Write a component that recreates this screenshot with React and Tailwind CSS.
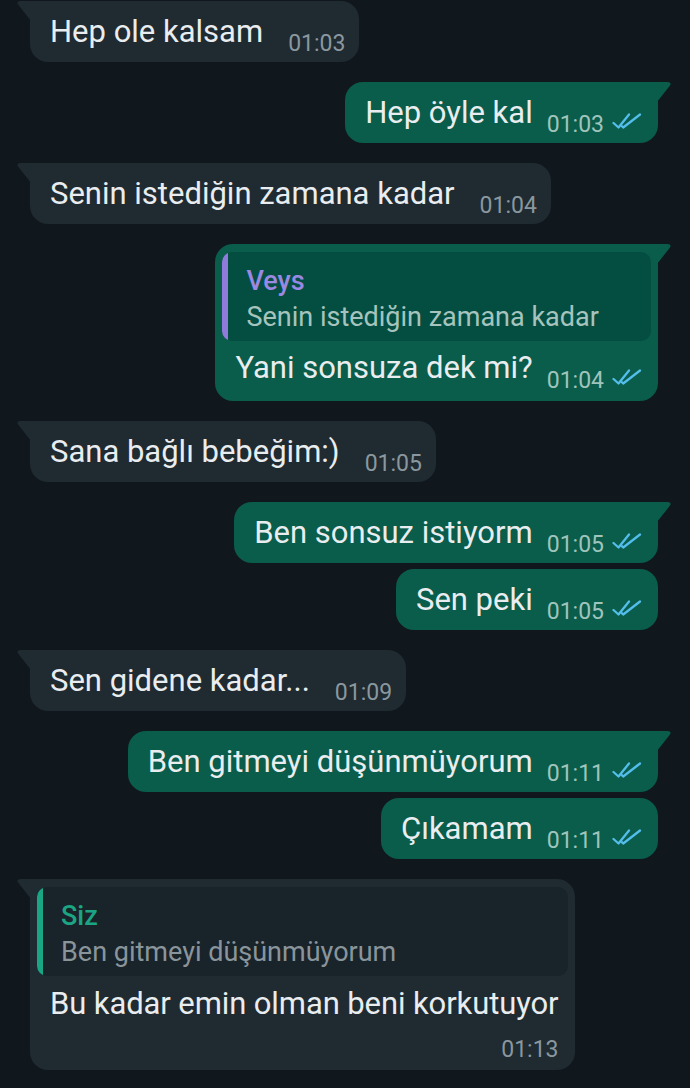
import React from 'react'

const messages = [
  { id: 1, out: false, text: 'Hep ole kalsam', time: '01:03', tail: true },
  { id: 2, out: true, text: 'Hep öyle kal', time: '01:03', tail: true },
  { id: 3, out: false, text: 'Senin istediğin zamana kadar', time: '01:04', tail: true },
  {
    id: 4,
    out: true,
    text: 'Yani sonsuza dek mi?',
    time: '01:04',
    tail: true,
    reply: { name: 'Veys', text: 'Senin istediğin zamana kadar' },
  },
  { id: 5, out: false, text: 'Sana bağlı bebeğim:)', time: '01:05', tail: true },
  { id: 6, out: true, text: 'Ben sonsuz istiyorm', time: '01:05', tail: true },
  { id: 7, out: true, text: 'Sen peki', time: '01:05', tail: false },
  { id: 8, out: false, text: 'Sen gidene kadar...', time: '01:09', tail: true },
  { id: 9, out: true, text: 'Ben gitmeyi düşünmüyorum', time: '01:11', tail: true },
  { id: 10, out: true, text: 'Çıkamam', time: '01:11', tail: false },
  {
    id: 11,
    out: false,
    text: 'Bu kadar emin olman beni korkutuyor',
    time: '01:13',
    tail: true,
    stacked: true,
    reply: { name: 'Siz', text: 'Ben gitmeyi düşünmüyorum' },
  },
]

const DoubleCheck = () => (
  <svg
    width="30"
    height="16"
    viewBox="0 0 30 16"
    fill="none"
    stroke="#53bdeb"
    strokeWidth="2.3"
    strokeLinecap="round"
    strokeLinejoin="round"
    className="mb-[9px] shrink-0"
  >
    <path d="M1.5 10 L6.5 14.5 L17 1.5" />
    <path d="M9.8 13.2 L11.2 14.5 L28 1.5" />
  </svg>
)

const Tail = ({ out }) => (
  <svg
    width="14"
    height="20"
    viewBox="0 0 14 20"
    className={out ? 'absolute top-0 right-[-13px]' : 'absolute top-0 left-[-13px] -scale-x-100'}
  >
    <path d="M0 0 H10.5 C13.6 0 14.4 1.9 12.6 4.1 L0 20 Z" fill={out ? '#0a5c4b' : '#1f2a31'} />
  </svg>
)

const Quote = ({ reply, out }) => (
  <div
    className={
      out
        ? 'flex overflow-hidden rounded-[10px] bg-[#044e41]'
        : 'flex overflow-hidden rounded-[10px] bg-[#19232a]'
    }
  >
    <div className={out ? 'w-[6px] shrink-0 bg-[#8f7bdc]' : 'w-[6px] shrink-0 bg-[#1aa583]'} />
    <div className="flex-1 pt-[11px] pb-[6px] pl-[18px] pr-[20px] text-[27px]">
      <div className={out ? 'leading-[36px] font-medium text-[#9a88e2]' : 'leading-[36px] font-medium text-[#1ba583]'}>
        {reply.name}
      </div>
      <div className={out ? 'leading-[36px] text-[#a6c4bd] whitespace-nowrap' : 'leading-[36px] text-[#89959b] whitespace-nowrap'}>
        {reply.text}
      </div>
    </div>
  </div>
)

const Bubble = ({ msg }) => {
  const { out, text, time, tail, reply, stacked } = msg
  const corners = tail ? (out ? 'rounded-[18px] rounded-tr-none' : 'rounded-[18px] rounded-tl-none') : 'rounded-[18px]'
  const timeColor = out ? 'text-[#9fc4bb]' : 'text-[#8a979e]'

  return (
    <div className={`relative ${corners} ${out ? 'bg-[#0a5c4b]' : 'bg-[#1f2a31]'} ${reply ? 'pt-[8px]' : ''}`}>
      {tail && <Tail out={out} />}
      {reply && (
        <div className="px-[7px]">
          <Quote reply={reply} out={out} />
        </div>
      )}
      {stacked ? (
        <div className="flex flex-col pl-[20px] pr-[16px] pt-[10px] pb-[7px]">
          <span className="text-[31px] leading-[36px] tracking-[-0.1px] text-[#e9edef] whitespace-nowrap">{text}</span>
          <span className={`mt-[15px] self-end text-[23px] leading-[26px] ${timeColor}`}>{time}</span>
        </div>
      ) : (
        <div
          className={`flex items-end pl-[20px] ${reply ? 'pt-[9px] pb-[7px]' : 'pt-[13px] pb-[5px]'} ${out ? 'pr-[16px]' : 'pr-[14px]'}`}
        >
          <span className={`text-[31px] leading-[36px] text-[#e9edef] whitespace-nowrap ${reply ? 'mb-2' : 'mb-[7px]'}`}>
            {text}
          </span>
          <div className={`flex items-end gap-[8px] ${out ? 'ml-[14px]' : 'ml-[25px]'}`}>
            <span className={`text-[23px] leading-[26px] ${timeColor}`}>{time}</span>
            {out && <DoubleCheck />}
          </div>
        </div>
      )}
    </div>
  )
}

export default function App() {
  return (
    <div
      className="h-[1088px] w-[690px] overflow-hidden bg-[#10171d] pt-[1px] pl-[30px] pr-[32px]"
      style={{ fontFamily: 'Roboto, "Noto Sans", sans-serif' }}
    >
      <div className="flex flex-col">
        {messages.map((msg, i) => {
          const prev = messages[i - 1]
          const gap = !prev ? 'mt-0' : prev.out === msg.out ? 'mt-[6px]' : 'mt-5'
          return (
            <div key={msg.id} className={`flex ${msg.out ? 'justify-end' : 'justify-start'} ${gap}`}>
              <Bubble msg={msg} />
            </div>
          )
        })}
      </div>
    </div>
  )
}
